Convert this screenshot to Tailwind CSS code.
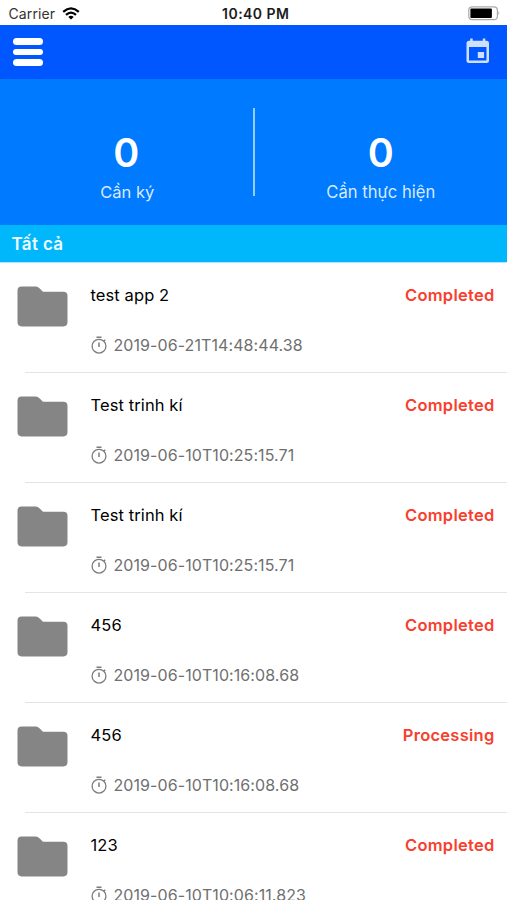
<!DOCTYPE html>
<html lang="vi">
<head>
<meta charset="utf-8">
<title>Tất cả</title>
<script src="https://cdn.jsdelivr.net/npm/@tailwindcss/browser@4"></script>
</head>
<body class="w-[507px] h-[900px] overflow-hidden bg-white font-['Inter','Noto_Sans',sans-serif] text-black">
<svg class="hidden">
  <symbol id="folder" viewBox="0 0 50 40"><path fill="#858585" d="M4.500 0.500H18.500Q20.500 0.500 22 2L25.500 5.500H45.500Q49.500 5.500 49.500 9.500V35.500Q49.500 39.500 45.500 39.500H4.500Q.5 39.500 .5 35.500V4.500Q.5 .5 4.500 .5Z"/></symbol>
  <symbol id="timer" viewBox="0 0 16 18"><g fill="none" stroke="#7c7c7c"><circle cx="8" cy="10.200" r="6.900" stroke-width="1.300"/><path stroke-width="1.500" d="M5.500 1.200h5M8 6.600v4.400"/><path stroke-width="1.300" d="M12.700 5.300l1.500-1.500"/></g></symbol>
</svg>
<div class="flex flex-col h-full">
  <header class="grid grid-cols-3 items-center h-[25px] shrink-0 pt-[2px] pl-[8.500px] pr-[6px] text-[14px] leading-[24px]">
    <div class="flex items-center gap-[7px] text-[#333]"><span class="tracking-[0.1px]">Carrier</span>
      <svg class="w-[18px] h-[13px] -mt-[2px]" viewBox="0 0 18 13"><g fill="none" stroke="#000" stroke-width="2.300"><path d="M1.200 4.800Q9-2 16.800 4.800"/><path d="M4 7.800Q9 3.400 14 7.800"/></g><path d="M9 12.600L6.300 9.900Q9 7.600 11.700 9.900Z"/></svg>
    </div>
    <div class="text-center font-semibold whitespace-nowrap tracking-[0.45px] pl-[2px] text-[#1c1c1c]">10:40 PM</div>
    <svg class="justify-self-end w-[33px] h-[15px] -mt-[2px]" viewBox="0 0 33 15"><rect x=".8" y=".8" width="28.600" height="12.900" rx="3.500" fill="#fff" stroke="#aaa" stroke-width="1.200"/><rect x="2.400" y="2.400" width="21.500" height="9.700" rx="1" fill="#000"/><path d="M30.500 5q1.800 2.200 0 4.400z" fill="#999"/></svg>
  </header>
  <nav class="flex items-center justify-between h-[54px] shrink-0 bg-[#0057ff] pl-[13px] pr-[17px]">
    <div class="flex flex-col gap-[4px]"><i class="block w-[30px] h-[6.500px] rounded-full bg-white"></i><i class="block w-[30px] h-[6.500px] rounded-full bg-white"></i><i class="block w-[30px] h-[6.500px] rounded-full bg-white"></i></div>
    <svg class="w-[24px] h-[26px] mb-[2px]" viewBox="0 0 24 26"><path fill="#cfe0ff" fill-rule="evenodd" d="M4.200 .5H6.700V2.800H16.800V.5h2.500V2.800H20.500Q23 2.800 23 5.300V22.500Q23 25 20.500 25H3Q.5 25 .5 22.500V5.300Q.5 2.800 3 2.800h1.200ZM3 9V22.500H20.500V9ZM11.800 14h6.300v6h-6.300Z"/></svg>
  </nav>
  <section class="flex items-start h-[146px] shrink-0 bg-[#007aff] pt-[29px]">
    <div class="flex-1 flex flex-col items-center pt-[24px]"><b class="text-[39.500px] leading-[42px] font-semibold text-white">0</b><span class="mt-[6px] ml-[2px] text-[16.500px] leading-[24px] text-[#d8eaff]">Cần ký</span></div>
    <div class="w-[2px] h-[88px] bg-[#99cbff]"></div>
    <div class="flex-1 flex flex-col items-center pt-[24px]"><b class="text-[39.500px] leading-[42px] font-semibold text-white">0</b><span class="mt-[6px] text-[16.600px] leading-[24px] text-[#d8eaff]">Cần thực hiện</span></div>
  </section>
  <h2 class="h-[38px] shrink-0 bg-[#00b7fc] border-b border-[#b0e6fd] pl-[11.500px] text-[17px] leading-[39px] font-semibold tracking-[0.35px] text-[#eefaff]">Tất cả</h2>
  <main id="list" class="flex flex-col"></main>
</div>
<script>
const rows = [
  ['test app 2', 'Completed', '2019-06-21T14:48:44.38'],
  ['Test trinh kí', 'Completed', '2019-06-10T10:25:15.71'],
  ['Test trinh kí', 'Completed', '2019-06-10T10:25:15.71'],
  ['456', 'Completed', '2019-06-10T10:16:08.68'],
  ['456', 'Processing', '2019-06-10T10:16:08.68'],
  ['123', 'Completed', '2019-06-10T10:06:11.823']
];
document.getElementById('list').innerHTML = rows.map(([name, status, time]) => `
<article class="h-[110px] shrink-0 flex flex-col">
  <div class="flex-1 flex pl-[17px] pr-[12.500px]">
    <svg class="w-[51px] h-[41px] mt-[23px] shrink-0"><use href="#folder"/></svg>
    <div class="flex-1 pl-[22.500px] pt-[19.500px]">
      <div class="flex justify-between text-[16.500px] leading-[24px]"><span class="tracking-[0.1px]">${name}</span><span class="font-semibold tracking-[0.26px] text-[#f8402e]">${status}</span></div>
      <div class="flex items-center gap-[7px] mt-[26.500px] text-[16px] leading-[24px] tracking-[0.08px] text-[#6f6f6f]"><svg class="w-[16px] h-[18px]"><use href="#timer"/></svg><span>${time}</span></div>
    </div>
  </div>
  <div class="h-px ml-[25px] bg-[#e4e4e4]"></div>
</article>`).join('');
</script>
</body>
</html>
